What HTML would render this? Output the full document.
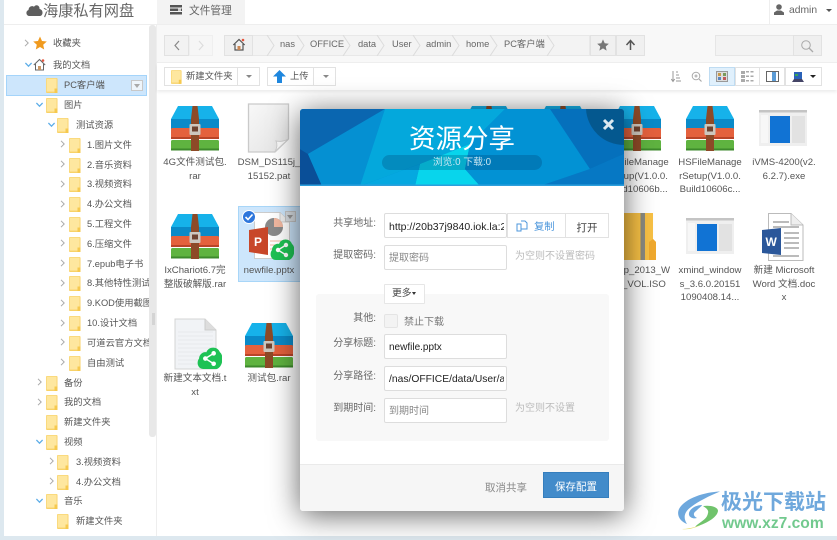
<!DOCTYPE html>
<html lang="zh"><head><meta charset="utf-8"><title>海康私有网盘</title>
<style>
*{box-sizing:border-box}
html,body{margin:0;padding:0}
body{width:837px;height:540px;overflow:hidden;position:relative;background:#fff;font-family:"Liberation Sans","Noto Sans CJK SC",sans-serif;font-size:9.3px;color:#555;filter:blur(.3px)}
.a{position:absolute}
.t{position:absolute;white-space:nowrap;line-height:14px;height:14px}
.fo{position:absolute;width:12px;height:15px}
.ar{position:absolute;width:7px;height:8px}
.rar{position:absolute;width:50px;height:47px}
.f{position:absolute;width:66px;text-align:center;line-height:13.6px;color:#555;font-size:9.6px;word-break:break-all}
.btn{position:absolute;background:#fff;border:1px solid #e2e2e2}
.lb{position:absolute;left:316px;width:60px;text-align:right;font-size:10px;line-height:14px;color:#666;white-space:nowrap}
.in{position:absolute;left:384px;width:123px;height:25px;background:#fff;border:1px solid #ddd;border-radius:2px;font-size:10px;line-height:26px;padding-left:4px;color:#333;overflow:hidden;white-space:nowrap}
.in span{display:block;width:115px;overflow:hidden;font-size:10.5px}
.ph{color:#888}
.hint{position:absolute;left:515px;font-size:10px;color:#bbb;line-height:14px;white-space:nowrap}
.crumb{position:absolute;top:37px;line-height:14px;color:#666;font-size:9.3px;white-space:nowrap}
</style></head><body>
<svg width="0" height="0" style="position:absolute"><defs>
<symbol id="folder" viewBox="0 0 12 15"><rect x="0" y="0" width="11.500" height="15" rx="1" fill="#f8d268"/><rect x=".6" y=".6" width="10" height="13" fill="#fee79f"/><path d="M8.500 10.500H11.500V15H8.500z" fill="#f6c94f"/></symbol>
<symbol id="rar" viewBox="0 0 50 47"><path d="M8 1H42L49 14V24H1V14z" fill="#16b2ea"/><path d="M1 14H49V24H1z" fill="#0a8ac8"/><rect x="1" y="23" width="48" height="11" rx="1.500" fill="#e4613d"/><rect x="1" y="32" width="48" height="2" fill="#b94428"/><rect x="1" y="35" width="48" height="10.500" rx="1.500" fill="#5fb340"/><rect x="1" y="43.500" width="48" height="2" fill="#3d8a2c"/><path d="M22.500 1h5L29 14V46H21V14z" fill="#8d4a27"/><rect x="19.500" y="19" width="11" height="11" rx="1" fill="#cdc7be"/><rect x="22" y="21.500" width="6" height="5" fill="#6e4330"/></symbol>
<symbol id="arr" viewBox="0 0 7 8"><path d="M2 .8 5.200 4 2 7.200" fill="none" stroke="#aaa" stroke-width="1"/></symbol>
<symbol id="dn" viewBox="0 0 7 8"><path d="M.4 2 3.500 5.200 6.600 2" fill="none" stroke="#5eaee8" stroke-width="1.300"/></symbol>
<symbol id="share" viewBox="0 0 24 24"><path d="M6 23C1 23-1 17 2 13 2 9 6 6 9 7 11 1 20 1 22 7 26 10 25 21 19 23z" fill="#1ec254"/><g fill="#fff"><circle cx="8" cy="13" r="2.200"/><circle cx="16" cy="8" r="2.200"/><circle cx="16" cy="18" r="2.200"/></g><path d="M16 8 8 13 16 18" stroke="#fff" stroke-width="1.400" fill="none"/></symbol>
<symbol id="app" viewBox="0 0 48 36"><rect width="48" height="36" fill="#efefef"/><rect width="48" height="2.500" fill="#c4c4c4"/><rect x="2" y="5" width="7" height="28" fill="#f7f7f7"/><rect x="11" y="6" width="20" height="27" fill="#1173d4"/><rect x="33" y="6" width="13" height="27" fill="#e2e2e2"/></symbol>
</defs></svg>

<!-- page frame -->
<div class="a" style="left:0;top:0;width:4px;height:540px;background:#dde8ef"></div>
<div class="a" style="left:0;top:536px;width:837px;height:4px;background:#dde8ef"></div>

<!-- top bar -->
<svg class="a" style="left:26px;top:3px" width="17" height="14" viewBox="0 0 17 14"><path d="M3.500 13C0 13-.8 8 2.500 7 2.700 3.500 6 2.200 8 3.800 9.800.8 14 2.500 13.500 6 17.500 6.500 17.500 13 13.500 13z" fill="#5e5e5e"/></svg>
<div class="t" style="left:43px;top:2px;height:20px;line-height:20px;font-size:15.200px;color:#666">海康私有网盘</div>
<div class="a" style="left:157px;top:0;width:88px;height:24px;background:#f3f3f3"></div>
<svg class="a" style="left:170px;top:5px" width="12" height="10" viewBox="0 0 12 10"><path d="M0 0h12v2.500H0zM0 3.500h12V6H0zM0 7h12v2.500H0z" fill="#555"/><path d="M8 3.500h3V6H8z" fill="#ccc"/></svg>
<div class="t" style="left:189px;top:4px;font-size:10.700px;color:#666">文件管理</div>
<div class="a" style="left:769px;top:0;width:1px;height:24px;background:#eee"></div>
<svg class="a" style="left:774px;top:4px" width="10" height="11" viewBox="0 0 10 11"><circle cx="5" cy="3" r="2.800" fill="#666"/><path d="M0 11V8.500L3 6.500H7L10 8.500V11z" fill="#666"/></svg>
<div class="t" style="left:789px;top:4px;font-size:10.300px;color:#666">admin</div>
<div class="a" style="left:826px;top:9px;border:3px solid transparent;border-top:3px solid #555"></div>
<div class="a" style="left:4px;top:24px;width:833px;height:1px;background:#eee"></div>

<!-- sidebar -->
<div class="a" style="left:6px;top:75px;width:141px;height:21px;background:#cde6fc;border:1px solid #a4d4fa"></div>
<div class="a" style="left:131px;top:80px;width:12px;height:11px;background:#eef5fb;border:1px solid #c8c8c8"></div>
<div class="a" style="left:134px;top:84px;border:3px solid transparent;border-top:4px solid #aaa"></div>
<div class="a" style="left:4px;top:25px;width:145px;height:511px;overflow:hidden">
<svg class="ar" style="left:19px;top:14px"><use href="#arr"/></svg>
<svg class="a" style="left:29px;top:11px" width="14" height="14" viewBox="0 0 14 14"><path d="M7 .5 9 5l4.800.5-3.600 3.200 1 4.800L7 11l-4.200 2.500 1-4.800L.2 5.500 5 5z" fill="#f09a1e"/></svg>
<div class="t" style="left:49px;top:11px">收藏夹</div>
<svg class="ar" style="left:21px;top:36px"><use href="#dn"/></svg>
<svg class="a" style="left:29px;top:33px" width="13" height="13" viewBox="0 0 13 13"><path d="M.8 7 6.500 1.500 12.200 7M2.500 6v6h8V6" fill="none" stroke="#666" stroke-width="1"/><rect x="5" y="8" width="3" height="4" fill="#c96"/><circle cx="10" cy="2.500" r="1.300" fill="#e5553c"/></svg>
<div class="t" style="left:49px;top:33px">我的文档</div>

<svg class="fo" style="left:42px;top:53px"><use href="#folder"/></svg><div class="t" style="left:60px;top:53px">PC客户端</div>
<svg class="ar" style="left:32px;top:76px"><use href="#dn"/></svg><svg class="fo" style="left:42px;top:73px"><use href="#folder"/></svg><div class="t" style="left:60px;top:73px">图片</div>
<svg class="ar" style="left:44px;top:96px"><use href="#dn"/></svg><svg class="fo" style="left:53px;top:93px"><use href="#folder"/></svg><div class="t" style="left:72px;top:93px">测试资源</div>

<svg class="ar" style="left:55px;top:115px"><use href="#arr"/></svg><svg class="fo" style="left:65px;top:113px"><use href="#folder"/></svg><div class="t" style="left:83px;top:113px">1.图片文件</div>
<svg class="ar" style="left:55px;top:135px"><use href="#arr"/></svg><svg class="fo" style="left:65px;top:133px"><use href="#folder"/></svg><div class="t" style="left:83px;top:133px">2.音乐资料</div>
<svg class="ar" style="left:55px;top:155px"><use href="#arr"/></svg><svg class="fo" style="left:65px;top:152px"><use href="#folder"/></svg><div class="t" style="left:83px;top:152px">3.视频资料</div>
<svg class="ar" style="left:55px;top:175px"><use href="#arr"/></svg><svg class="fo" style="left:65px;top:172px"><use href="#folder"/></svg><div class="t" style="left:83px;top:172px">4.办公文档</div>
<svg class="ar" style="left:55px;top:195px"><use href="#arr"/></svg><svg class="fo" style="left:65px;top:192px"><use href="#folder"/></svg><div class="t" style="left:83px;top:192px">5.工程文件</div>
<svg class="ar" style="left:55px;top:214px"><use href="#arr"/></svg><svg class="fo" style="left:65px;top:212px"><use href="#folder"/></svg><div class="t" style="left:83px;top:212px">6.压缩文件</div>
<svg class="ar" style="left:55px;top:234px"><use href="#arr"/></svg><svg class="fo" style="left:65px;top:232px"><use href="#folder"/></svg><div class="t" style="left:83px;top:232px">7.epub电子书</div>
<svg class="ar" style="left:55px;top:254px"><use href="#arr"/></svg><svg class="fo" style="left:65px;top:251px"><use href="#folder"/></svg><div class="t" style="left:83px;top:251px">8.其他特性测试</div>
<svg class="ar" style="left:55px;top:274px"><use href="#arr"/></svg><svg class="fo" style="left:65px;top:271px"><use href="#folder"/></svg><div class="t" style="left:83px;top:271px">9.KOD使用截图</div>
<svg class="ar" style="left:55px;top:294px"><use href="#arr"/></svg><svg class="fo" style="left:65px;top:291px"><use href="#folder"/></svg><div class="t" style="left:83px;top:291px">10.设计文档</div>
<svg class="ar" style="left:55px;top:313px"><use href="#arr"/></svg><svg class="fo" style="left:65px;top:311px"><use href="#folder"/></svg><div class="t" style="left:83px;top:311px">可道云官方文档</div>
<svg class="ar" style="left:55px;top:333px"><use href="#arr"/></svg><svg class="fo" style="left:65px;top:331px"><use href="#folder"/></svg><div class="t" style="left:83px;top:331px">自由测试</div>

<svg class="ar" style="left:32px;top:353px"><use href="#arr"/></svg><svg class="fo" style="left:42px;top:351px"><use href="#folder"/></svg><div class="t" style="left:60px;top:351px">备份</div>
<svg class="ar" style="left:32px;top:373px"><use href="#arr"/></svg><svg class="fo" style="left:42px;top:370px"><use href="#folder"/></svg><div class="t" style="left:60px;top:370px">我的文档</div>
<svg class="fo" style="left:42px;top:390px"><use href="#folder"/></svg><div class="t" style="left:60px;top:390px">新建文件夹</div>
<svg class="ar" style="left:32px;top:413px"><use href="#dn"/></svg><svg class="fo" style="left:42px;top:410px"><use href="#folder"/></svg><div class="t" style="left:60px;top:410px">视频</div>
<svg class="ar" style="left:44px;top:432px"><use href="#arr"/></svg><svg class="fo" style="left:53px;top:430px"><use href="#folder"/></svg><div class="t" style="left:72px;top:430px">3.视频资料</div>
<svg class="ar" style="left:44px;top:452px"><use href="#arr"/></svg><svg class="fo" style="left:53px;top:450px"><use href="#folder"/></svg><div class="t" style="left:72px;top:450px">4.办公文档</div>
<svg class="ar" style="left:32px;top:472px"><use href="#dn"/></svg><svg class="fo" style="left:42px;top:469px"><use href="#folder"/></svg><div class="t" style="left:60px;top:469px">音乐</div>
<svg class="fo" style="left:53px;top:489px"><use href="#folder"/></svg><div class="t" style="left:72px;top:489px">新建文件夹</div>
</div>
<div class="a" style="left:149px;top:25px;width:7px;height:412px;background:#e8e8e8;border-radius:3px"></div>
<div class="a" style="left:152px;top:313px;width:3px;height:12px;background:#d4d4d4"></div>
<div class="a" style="left:156px;top:25px;width:1px;height:511px;background:#eee"></div>

<!-- address bar -->
<div class="a" style="left:157px;top:25px;width:680px;height:38px;background:#f8f8f8;border-bottom:1px solid #eee"></div>
<div class="a" style="left:164px;top:35px;width:25px;height:21px;background:#f2f2f2;border:1px solid #e2e2e2"></div>
<div class="a" style="left:189px;top:35px;width:24px;height:21px;background:#f6f6f6;border:1px solid #efefef"></div>
<svg class="a" style="left:173px;top:40px" width="8" height="11" viewBox="0 0 8 11"><path d="M6 1 2 5.500 6 10" fill="none" stroke="#888" stroke-width="1.200"/></svg>
<svg class="a" style="left:197px;top:40px" width="8" height="11" viewBox="0 0 8 11"><path d="M2 1 6 5.500 2 10" fill="none" stroke="#ddd" stroke-width="1.200"/></svg>
<div class="a" style="left:224px;top:35px;width:366px;height:21px;background:#f3f3f3;border:1px solid #e8e8e8"></div>
<div class="a" style="left:224px;top:35px;width:29px;height:21px;background:#f0f0f0;border:1px solid #e2e2e2"></div>
<svg class="a" style="left:232px;top:38px" width="14" height="13" viewBox="0 0 13 13"><path d="M.8 7 6.500 1.500 12.200 7M2.500 6v6h8V6" fill="none" stroke="#555" stroke-width="1.200"/><rect x="5" y="8" width="3" height="4" fill="#c85"/><circle cx="10.500" cy="2" r="1.300" fill="#e5553c"/></svg>
<svg class="a" style="left:253px;top:35px" width="337" height="21" viewBox="0 0 337 21"><path fill="none" stroke="#dcdcdc" d="M14 0 21 10.500 14 21M44 0 51 10.500 44 21M90 0 97 10.500 90 21M124 0 131 10.500 124 21M160 0 167 10.500 160 21M199 0 206 10.500 199 21M237 0 244 10.500 237 21M294 0 301 10.500 294 21"/></svg>
<div class="crumb" style="left:280px">nas</div>
<div class="crumb" style="left:310px">OFFICE</div>
<div class="crumb" style="left:358px">data</div>
<div class="crumb" style="left:392px">User</div>
<div class="crumb" style="left:426px">admin</div>
<div class="crumb" style="left:466px">home</div>
<div class="crumb" style="left:504px">PC客户端</div>
<div class="a" style="left:590px;top:35px;width:26px;height:21px;background:#f0f0f0;border:1px solid #e2e2e2"></div>
<svg class="a" style="left:597px;top:39px" width="12" height="12" viewBox="0 0 14 14"><path d="M7 .5 9 5l4.800.5-3.600 3.200 1 4.800L7 11l-4.200 2.500 1-4.800L.2 5.500 5 5z" fill="#777"/></svg>
<div class="a" style="left:616px;top:35px;width:29px;height:21px;background:#f0f0f0;border:1px solid #e2e2e2"></div>
<svg class="a" style="left:625px;top:39px" width="11" height="12" viewBox="0 0 11 12"><path d="M5.500 11V2M1.500 6 5.500 1.500 9.500 6" fill="none" stroke="#555" stroke-width="1.500"/></svg>
<div class="a" style="left:715px;top:35px;width:79px;height:21px;background:#f3f3f3;border:1px solid #e6e6e6"></div>
<div class="a" style="left:793px;top:35px;width:29px;height:21px;background:#efefef;border:1px solid #e2e2e2"></div>
<svg class="a" style="left:800px;top:39px" width="14" height="14" viewBox="0 0 14 14"><circle cx="6" cy="6" r="4.300" fill="none" stroke="#aaa"/><path d="M9 9 13 13" stroke="#aaa" stroke-width="1.300"/></svg>

<!-- toolbar -->
<div class="a" style="left:157px;top:63px;width:680px;height:27px;background:#fff;box-shadow:0 2px 3px rgba(0,0,0,.08)"></div>
<div class="btn" style="left:164px;top:67px;width:74px;height:19px"></div>
<svg class="a" style="left:171px;top:70px" width="11" height="14"><use href="#folder"/></svg>
<div class="t" style="left:186px;top:69px">新建文件夹</div>
<div class="btn" style="left:237px;top:67px;width:23px;height:19px"></div>
<div class="a" style="left:246px;top:75px;border:3px solid transparent;border-top:3px solid #888"></div>
<div class="btn" style="left:267px;top:67px;width:47px;height:19px"></div>
<svg class="a" style="left:273px;top:70px" width="13" height="13" viewBox="0 0 13 13"><path d="M6.500 0 13 6.500H9V13H4V6.500H0z" fill="#1f87de"/></svg>
<div class="t" style="left:290px;top:69px">上传</div>
<div class="btn" style="left:313px;top:67px;width:23px;height:19px"></div>
<div class="a" style="left:323px;top:75px;border:3px solid transparent;border-top:3px solid #888"></div>
<svg class="a" style="left:671px;top:70px" width="10" height="13" viewBox="0 0 10 13"><path d="M2 1v10M.3 9 2 11.500 3.700 9M5 2h2M5 5h3M5 8h4M5 11h5" fill="none" stroke="#999"/></svg>
<svg class="a" style="left:691px;top:71px" width="11" height="11" viewBox="0 0 11 11"><circle cx="5" cy="5" r="3.800" fill="none" stroke="#aaa"/><path d="M8 8 10.500 10.500" stroke="#aaa" stroke-width="1.200"/><circle cx="5" cy="5" r="1.500" fill="#bbb"/></svg>
<div class="btn" style="left:709px;top:67px;width:26px;height:19px;background:#e0f0fc;border-color:#bfdcf2"></div>
<svg class="a" style="left:716px;top:71px" width="12" height="11" viewBox="0 0 12 11"><rect x=".5" y=".5" width="11" height="10" fill="#ddd" stroke="#999"/><rect x="2" y="2" width="3" height="3" fill="#c89a4a"/><rect x="7" y="2" width="3" height="3" fill="#7a9a5a"/><rect x="2" y="6" width="3" height="3" fill="#5a86c0"/><rect x="7" y="6" width="3" height="3" fill="#c05a5a"/></svg>
<div class="btn" style="left:735px;top:67px;width:25px;height:19px"></div>
<svg class="a" style="left:741px;top:71px" width="13" height="11" viewBox="0 0 13 11"><g fill="#aaa"><rect width="4" height="3"/><rect y="4" width="4" height="3"/><rect y="8" width="4" height="3"/><rect x="5" width="3" height="1.500"/><rect x="9.500" width="3" height="1.500"/><rect x="5" y="4.500" width="3" height="1.500"/><rect x="9.500" y="4.500" width="3" height="1.500"/><rect x="5" y="9" width="3" height="1.500"/><rect x="9.500" y="9" width="3" height="1.500"/></g></svg>
<div class="btn" style="left:759px;top:67px;width:26px;height:19px"></div>
<svg class="a" style="left:766px;top:71px" width="13" height="11" viewBox="0 0 13 11"><rect x=".5" y=".5" width="12" height="10" fill="#fff" stroke="#666"/><rect x="6" y="1" width="4" height="9" fill="#5b9bd5"/></svg>
<div class="btn" style="left:785px;top:67px;width:37px;height:19px"></div>
<svg class="a" style="left:792px;top:71px" width="12" height="11" viewBox="0 0 12 11"><rect x="2" y="1" width="8" height="7" fill="#2a62b8"/><rect x="3" y="3" width="3" height="2" fill="#3aa655"/><path d="M0 11 2 8h8l2 3z" fill="#446"/></svg>
<div class="a" style="left:810px;top:75px;border:3px solid transparent;border-top:3px solid #222"></div>

<!-- files -->
<svg class="rar" style="left:170px;top:105px"><use href="#rar"/></svg>
<div class="f" style="left:162px;top:156px">4G文件测试包.<br>rar</div>
<svg class="a" style="left:247px;top:103px" width="43" height="50" viewBox="0 0 43 50"><defs><linearGradient id="pg" x1="0" y1="0" x2="1" y2="1"><stop offset="0" stop-color="#f8f8f8"/><stop offset="1" stop-color="#e2e2e2"/></linearGradient></defs><path d="M1.500 1H41.500V36L28 49H1.500z" fill="url(#pg)" stroke="#cacaca" stroke-width="1.300"/><path d="M28 48.500C31 43 30 40 29 38 33 39 38 38 41.500 36z" fill="#fbfbfb" stroke="#cfcfcf"/></svg>
<div class="f" style="left:236px;top:156px">DSM_DS115j_<br>15152.pat</div>
<svg class="rar" style="left:464px;top:105px"><use href="#rar"/></svg>
<svg class="rar" style="left:538px;top:105px"><use href="#rar"/></svg>
<svg class="rar" style="left:612px;top:105px"><use href="#rar"/></svg>
<div class="f" style="left:604px;top:156px">HSFileManage<br>rSetup(V1.0.0.<br>Build10606b...</div>
<svg class="rar" style="left:685px;top:105px"><use href="#rar"/></svg>
<div class="f" style="left:677px;top:156px">HSFileManage<br>rSetup(V1.0.0.<br>Build10606c...</div>
<svg class="a" style="left:759px;top:110px" width="48" height="36"><use href="#app"/></svg>
<div class="f" style="left:751px;top:156px">iVMS-4200(v2.<br>6.2.7).exe</div>

<svg class="rar" style="left:170px;top:213px"><use href="#rar"/></svg>
<div class="f" style="left:162px;top:264px">IxChariot6.7完<br>整版破解版.rar</div>
<div class="a" style="left:238px;top:206px;width:64px;height:76px;background:#cde6fc;border:1px solid #a8d6f8"></div>
<svg class="a" style="left:254px;top:212px" width="36" height="47" viewBox="0 0 36 47"><path d="M.5.5H26L35.500 10V46.500H.5z" fill="#fff" stroke="#ccc"/><path d="M26 .5V10H35.500" fill="#eee" stroke="#ccc"/><circle cx="20" cy="15" r="9" fill="#8a8a8a"/><path d="M20 15V6a9 9 0 0 1 9 9z" fill="#f2b8a0"/><path stroke="#f0b8a0" d="M16 29H33M16 33H33M16 37H33"/></svg>
<svg class="a" style="left:249px;top:227px" width="19" height="28" viewBox="0 0 19 28"><path d="M0 3 19 0V28L0 25z" fill="#c8472a"/><text x="5" y="19" font-family="Liberation Sans" font-size="12" font-weight="bold" fill="#fff">P</text></svg>
<svg class="a" style="left:270px;top:237px" width="24" height="24"><use href="#share"/></svg>
<svg class="a" style="left:242px;top:210px" width="14" height="14" viewBox="0 0 14 14"><circle cx="7" cy="7" r="6.500" fill="#2d76dc" stroke="#fff"/><path d="M3.500 7 6 9.500 10.500 4.500" stroke="#fff" stroke-width="1.600" fill="none"/></svg>
<div class="a" style="left:285px;top:211px;width:11px;height:11px;background:#d8dee3;border:1px solid #c4c4c4"></div>
<div class="a" style="left:287px;top:215px;border:3px solid transparent;border-top:4px solid #999"></div>
<div class="f" style="left:236px;top:264px">newfile.pptx</div>
<svg class="a" style="left:612px;top:213px" width="46" height="48" viewBox="0 0 46 48"><path d="M0 0H41V26L44 29V47H0z" fill="#f8c145"/><rect x="28.500" y="0" width="4.500" height="47" fill="#8a8a80"/><path d="M37 29 41 26 44 29V47H37z" fill="#f0a92e"/></svg>
<div class="f" style="left:597px;top:264px;width:80px;white-space:nowrap">Setup_2013_W<br>CH_VOL.ISO</div>
<svg class="a" style="left:686px;top:218px" width="48" height="36"><use href="#app"/></svg>
<div class="f" style="left:677px;top:264px">xmind_window<br>s_3.6.0.20151<br>1090408.14...</div>
<svg class="a" style="left:762px;top:213px" width="42" height="48" viewBox="0 0 42 48"><path d="M6.500 .5H29L41 12V47.500H6.500z" fill="#fff" stroke="#bbb"/><path d="M29 .5V12H41" fill="#eee" stroke="#bbb"/><path stroke="#777" d="M11 9H27M11 14H37M22 20H37M22 25H37M22 30H37M22 35H37M11 43H37"/><path d="M0 17 19 15V42L0 40z" fill="#2b579a"/><text x="3.500" y="33" font-family="Liberation Sans" font-size="12" font-weight="bold" fill="#fff">W</text></svg>
<div class="f" style="left:751px;top:264px">新建 Microsoft<br>Word 文档.doc<br>x</div>

<svg class="a" style="left:174px;top:318px" width="43" height="52" viewBox="0 0 43 52"><path d="M1 1H31L42 12V51H1z" fill="#f1f3f6" stroke="#d4d4d4"/><path d="M31 1V12H42" fill="#ddd" stroke="#ccc"/><path stroke="#e6e8ec" d="M4 14H39M4 18H39M4 22H39M4 26H39M4 30H39M4 34H39M4 38H39M4 42H39M4 46H39"/></svg>
<svg class="a" style="left:197px;top:345px" width="25" height="25"><use href="#share"/></svg>
<div class="f" style="left:162px;top:372px">新建文本文档.t<br>xt</div>
<svg class="rar" style="left:244px;top:322px"><use href="#rar"/></svg>
<div class="f" style="left:236px;top:372px">测试包.rar</div>

<!-- modal -->
<div class="a" style="left:300px;top:109px;width:324px;height:402px;background:#fff;border-radius:3px;box-shadow:0 4px 30px rgba(0,0,0,.62)"></div>
<svg class="a" style="left:300px;top:109px;border-radius:3px 3px 0 0" width="324" height="77" viewBox="0 0 324 77">
<rect width="324" height="77" fill="#028bd0"/>
<path d="M0 0H85L8 45 0 40z" fill="#0a66b0"/>
<path d="M0 40 8 45 22 77H0z" fill="#0a4f98"/>
<path d="M8 45 85 0 60 77H22z" fill="#0590d2"/>
<path d="M85 0H205L170 35 120 55 60 77z" fill="#04a8dc"/>
<path d="M120 55 170 35 165 60 180 77H115z" fill="#08d5ec"/>
<path d="M60 77 120 55 115 77z" fill="#05a8e0"/>
<path d="M205 0H250L290 60 240 77H180L165 60 170 35z" fill="#0292d4"/>
<path d="M250 0H324V45L290 60z" fill="#0570bc"/>
<path d="M290 60 324 45V77H240z" fill="#0678c4"/>
<path d="M324 0V36A38 38 0 0 1 286 0z" fill="#04588f"/>
<rect y="75.500" width="324" height="1.500" fill="#2d9fdc"/>
</svg>
<div class="t" style="left:300px;top:123px;width:324px;height:32px;line-height:32px;text-align:center;font-size:26.500px;color:#fff">资源分享</div>
<div class="a" style="left:382px;top:155px;width:160px;height:15px;border-radius:8px;background:rgba(0,50,100,.25)"></div>
<div class="t" style="left:382px;top:155px;width:160px;height:15px;line-height:15px;text-align:center;font-size:9.800px;color:#c8e6f2">浏览:0 下载:0</div>
<svg class="a" style="left:602px;top:118px" width="13" height="13" viewBox="0 0 13 13"><path d="M2 2 11 11M11 2 2 11" stroke="#dbe8f0" stroke-width="3"/></svg>

<div class="lb" style="top:217px">共享地址:</div>
<div class="in" style="top:213px;color:#222"><span>http://20b37j9840.iok.la:2401</span></div>
<div class="a" style="left:507px;top:213px;width:59px;height:25px;background:#fff;border:1px solid #e2e2e2"></div>
<svg class="a" style="left:516px;top:220px" width="12" height="12" viewBox="0 0 12 12"><path d="M1 4H5V11H1zM5 1H9L11 3V9H5" fill="none" stroke="#4d97dc" stroke-width="1"/></svg>
<div class="t" style="left:534px;top:221px;font-size:10.300px;color:#4d97dc">复制</div>
<div class="a" style="left:565px;top:213px;width:44px;height:25px;background:#fff;border:1px solid #e2e2e2"></div>
<div class="t" style="left:565px;top:221px;width:44px;text-align:center;font-size:10.500px;color:#444">打开</div>
<div class="lb" style="top:249px">提取密码:</div>
<div class="in ph" style="top:245px">提取密码</div>
<div class="hint" style="top:250px">为空则不设置密码</div>

<div class="a" style="left:316px;top:294px;width:293px;height:147px;background:#f8f8f8;border-radius:3px"></div>
<div class="a" style="left:384px;top:284px;width:41px;height:20px;background:#fff;border:1px solid #e6e6e6;border-radius:1px"></div>
<div class="t" style="left:392px;top:287px;font-size:9.800px;color:#444">更多</div>
<div class="a" style="left:412px;top:292px;border:2.500px solid transparent;border-top:3px solid #333"></div>
<div class="lb" style="top:312px">其他:</div>
<div class="a" style="left:384px;top:314px;width:14px;height:14px;background:#f3f3f3;border:1px solid #e4e4e4;border-radius:2px"></div>
<div class="t" style="left:404px;top:316px;font-size:10px;color:#777">禁止下载</div>
<div class="lb" style="top:337px">分享标题:</div>
<div class="in" style="top:334px;color:#222">newfile.pptx</div>
<div class="lb" style="top:370px">分享路径:</div>
<div class="in" style="top:366px;color:#222"><span style="font-size:10.300px">/nas/OFFICE/data/User/admin/home</span></div>
<div class="lb" style="top:402px">到期时间:</div>
<div class="in ph" style="top:398px">到期时间</div>
<div class="hint" style="top:402px">为空则不设置</div>

<div class="a" style="left:300px;top:464px;width:324px;height:47px;background:#f6f6f6;border-top:1px solid #eaeaea;border-radius:0 0 3px 3px"></div>
<div class="t" style="left:485px;top:481px;font-size:10.500px;color:#888">取消共享</div>
<div class="a" style="left:543px;top:472px;width:66px;height:26px;background:#428bca;border:1px solid #357ebd"></div>
<div class="t" style="left:543px;top:480px;width:66px;text-align:center;font-size:10.500px;color:#fff">保存配置</div>

<!-- watermark -->
<svg class="a" style="left:677px;top:488px" width="46" height="44" viewBox="0 0 46 44">
<path d="M43 3.500C28 4 8 10 2 21-1 28 4 34 10 36 6 30 7 24 14 19 22 13 32 8 43 3.500z" fill="#6ea8dd"/>
<path d="M25 17C18 17 11 22 12 27 13 30 17 31 20 30 16 28 16 25 19 23 22 20 25 18 25 17z" fill="#6ea8dd"/>
<path d="M26 18C34 17 41 19 41 23 40 30 28 36 18 39 22 34 30 32 31 25 32 22 29 20 26 18z" fill="#70c36c"/>
<path d="M5 41C10 41 14 40 18 39L24 37C18 40 11 42 5 41z" fill="#e5dc60"/>
</svg>
<div class="t" style="left:721px;top:491px;height:24px;line-height:24px;font-size:21px;font-weight:bold;color:#6fa8dc">极光下载站</div>
<div class="t" style="left:722px;top:516px;height:16px;line-height:16px;font-size:15.600px;font-weight:bold;color:#72c98e">www.xz7.com</div>
</body></html>
